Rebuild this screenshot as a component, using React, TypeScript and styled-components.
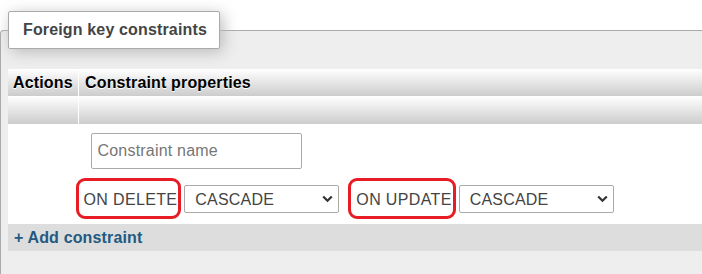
import React from "react";
import styled, { createGlobalStyle } from "styled-components";

const Global = createGlobalStyle`
  html, body { margin: 0; padding: 0; background: #fff; overflow: hidden; }
  body { font-family: "Liberation Sans", Arial, sans-serif; font-size: 16px; color: #444; }
`;

const Fieldset = styled.fieldset`
  margin: 11px 0 0 0;
  padding: 20px 0 0 7px;
  width: calc(100% + 20px);
  height: 263px;
  box-sizing: border-box;
  border: 1px solid #aaa;
  border-right: none;
  border-bottom: none;
  border-radius: 4px 0 0 0;
  background: #eee;
`;

const Legend = styled.legend`
  padding: 0 12px 0 14px;
  height: 38px;
  line-height: 36px;
  box-sizing: border-box;
  background: #fff;
  border: 1px solid #aaa;
  border-radius: 2px;
  box-shadow: 3px 3px 15px #bbb;
  font-weight: bold;
  color: #444;
  font-size: 16px;
  letter-spacing: 0.15px;
`;

const Table = styled.table`
  width: 100%;
  border-collapse: collapse;
  border-spacing: 0;
`;

const HeadCell = styled.th<{ $narrow?: boolean; $tall?: boolean }>`
  height: ${(p) => (p.$tall ? 28 : 27)}px;
  padding: 0 0 0 ${(p) => (p.$narrow ? 5 : 6)}px;
  width: ${(p) => (p.$narrow ? "65px" : "auto")};
  text-align: left;
  font-weight: bold;
  font-size: 16px;
  letter-spacing: 0.15px;
  color: #000;
  text-shadow: 0 1px 0 #fff;
  background: linear-gradient(#fff, #ccc);
  border-right: ${(p) => (p.$narrow ? "1px solid #fff" : "none")};
  white-space: nowrap;
`;

const BodyCell = styled.td`
  background: #fff;
  vertical-align: top;
  padding: 9px 5px 11px 5px;
`;

const EmptyCell = styled.td`
  background: #fff;
`;

const NameInput = styled.input`
  display: block;
  margin: 0 0 16px 7px;
  width: 211px;
  height: 36px;
  box-sizing: border-box;
  border: 1px solid #aaa;
  border-radius: 2px;
  padding: 0 6px;
  font-family: "Liberation Sans", Arial, sans-serif;
  font-size: 16px;
  letter-spacing: 0.2px;
  color: #444;
  background: #fff;
  &::placeholder { color: #767676; }
`;

const ActionRow = styled.div`
  display: flex;
  align-items: center;
  height: 28px;
`;

const Label = styled.span<{ $gapLeft: number }>`
  position: relative;
  margin-left: ${(p) => p.$gapLeft}px;
  margin-right: 7px;
  font-size: 16px;
  letter-spacing: 0.35px;
  color: #444;
  white-space: nowrap;
  line-height: 20px;
  padding-top: 2px;
  &::after {
    content: "";
    position: absolute;
    left: -8px;
    right: -4px;
    top: -10px;
    bottom: -9px;
    border: 3.5px solid #e81c24;
    border-radius: 9px;
  }
`;

const SelectWrap = styled.span`
  position: relative;
  display: inline-block;
  height: 28px;
`;

const Select = styled.select`
  appearance: none;
  -webkit-appearance: none;
  width: 155px;
  height: 28px;
  box-sizing: border-box;
  border: 1px solid #aaa;
  border-radius: 2px;
  background: #fff;
  padding: 0 0 0 10px;
  font-family: "Liberation Sans", Arial, sans-serif;
  font-size: 16px;
  letter-spacing: 0.2px;
  color: #444;
`;

const Chevron = styled.svg`
  position: absolute;
  right: 6px;
  top: 10px;
  width: 11px;
  height: 8px;
  pointer-events: none;
`;

const AddCell = styled.td`
  background: #ddd;
  height: 27px;
  padding: 0 0 0 6px;
`;

const AddLink = styled.a`
  font-weight: bold;
  font-size: 16px;
  letter-spacing: 0.15px;
  color: #235a81;
  text-decoration: none;
`;

const CascadeSelect = () => (
  <SelectWrap>
    <Select defaultValue="CASCADE">
      <option>CASCADE</option>
      <option>SET NULL</option>
      <option>NO ACTION</option>
      <option>RESTRICT</option>
    </Select>
    <Chevron viewBox="0 0 11 8">
      <path d="M1.2 1.5 L5.5 5.8 L9.8 1.5" fill="none" stroke="#333" strokeWidth="2.2" />
    </Chevron>
  </SelectWrap>
);

export default function App() {
  return (
    <>
      <Global />
      <Fieldset>
        <Legend>Foreign key constraints</Legend>
        <Table>
          <thead>
            <tr>
              <HeadCell $narrow>Actions</HeadCell>
              <HeadCell>Constraint properties</HeadCell>
            </tr>
            <tr>
              <HeadCell $narrow $tall></HeadCell>
              <HeadCell $tall></HeadCell>
            </tr>
          </thead>
          <tbody>
            <tr>
              <EmptyCell />
              <BodyCell>
                <NameInput placeholder="Constraint name" />
                <ActionRow>
                  <Label $gapLeft={0}>ON DELETE</Label>
                  <CascadeSelect />
                  <Label $gapLeft={17}>ON UPDATE</Label>
                  <CascadeSelect />
                </ActionRow>
              </BodyCell>
            </tr>
            <tr>
              <AddCell colSpan={2}>
                <AddLink href="#">+ Add constraint</AddLink>
              </AddCell>
            </tr>
          </tbody>
        </Table>
      </Fieldset>
    </>
  );
}
